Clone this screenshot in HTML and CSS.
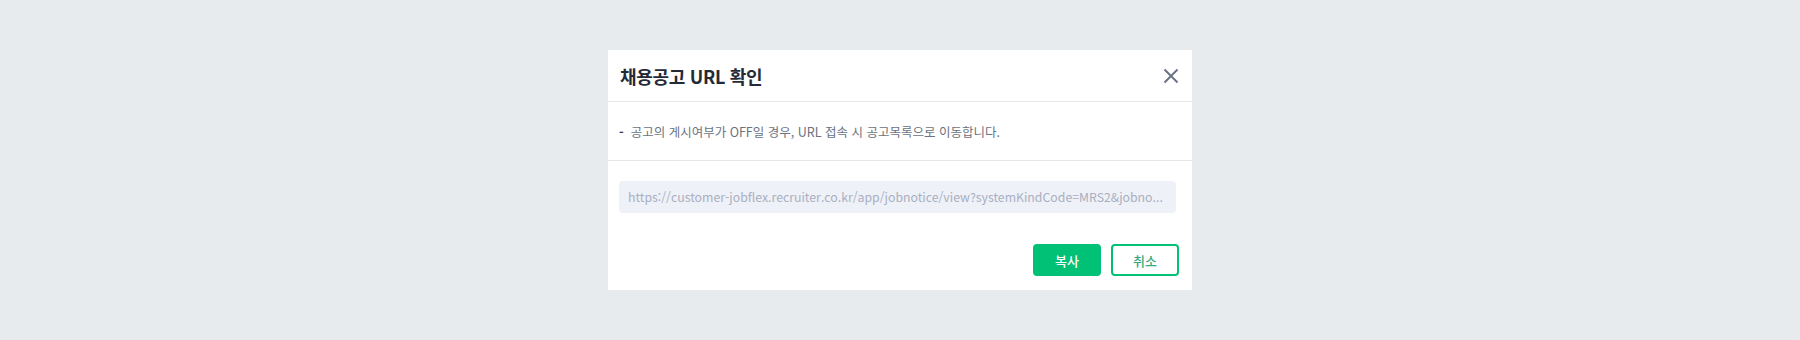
FILE: index.html
```html
<!DOCTYPE html>
<html lang="ko">
<head>
<meta charset="utf-8">
<title>채용공고 URL 확인</title>
<link rel="stylesheet" href="styles.css">
</head>
<body>
<div class="modal">
  <div class="modal-header">
    <h2 class="modal-title">채용공고 URL 확인</h2>
    <button class="close-btn" aria-label="닫기">
      <svg width="16" height="16" viewBox="0 0 16 16"><path d="M1.5 1.5 L14.5 14.5 M14.5 1.5 L1.5 14.5" stroke="#6b7483" stroke-width="2" fill="none"/></svg>
    </button>
  </div>
  <div class="modal-notice">
    <span class="dash">-</span><span class="notice-text">공고의 게시여부가 OFF일 경우, URL 접속 시 공고목록으로 이동합니다.</span>
  </div>
  <div class="modal-body">
    <div class="url-box">https://customer-jobflex.recruiter.co.kr/app/jobnotice/view?systemKindCode=MRS2&amp;jobno...</div>
    <div class="modal-footer">
      <button class="btn btn-primary">복사</button>
      <button class="btn btn-outline">취소</button>
    </div>
  </div>
</div>
</body>
</html>
```
FILE: styles.css
```css
html, body {
  margin: 0;
  padding: 0;
}
body {
  background: #e8ebee;
  height: 340px;
  font-family: "Noto Sans CJK KR", "Noto Sans", sans-serif;
  overflow: hidden;
}
.modal {
  width: 584px;
  margin: 50px auto 0;
  background: #ffffff;
}
.modal-header {
  height: 51px;
  display: flex;
  align-items: center;
  justify-content: space-between;
  padding: 0 12px 0 12px;
  border-bottom: 1px solid #e5e8eb;
}
.modal-title {
  margin: 0;
  font-size: 18px;
  font-weight: 700;
  color: #252b36;
  letter-spacing: -0.3px;
  line-height: 1;
}
.close-btn {
  background: none;
  border: 0;
  padding: 0;
  width: 16px;
  height: 16px;
  display: flex;
  margin-right: 1px;
  cursor: pointer;
}
.modal-notice {
  height: 58px;
  display: flex;
  align-items: center;
  padding: 0 12px 0 11px;
  border-bottom: 1px solid #e5e8eb;
  font-size: 12.5px;
  color: #6b7280;
}
.dash {
  color: #333a45;
  font-weight: 700;
  margin-right: 7px;
}
.modal-body {
  padding: 20px 13px 14px 11px;
}
.url-box {
  width: 540px;
  height: 32px;
  line-height: 32px;
  padding: 0 8px 0 9px;
  background: #eff1f8;
  border-radius: 4px;
  color: #a9afc1;
  font-size: 12.3px;
  white-space: nowrap;
}
.modal-footer {
  margin-top: 31px;
  display: flex;
  justify-content: flex-end;
  gap: 10px;
}
.btn {
  width: 68px;
  height: 32px;
  border-radius: 4px;
  font-family: "Noto Sans CJK KR", "Noto Sans", sans-serif;
  font-size: 13px;
  font-weight: 500;
  cursor: pointer;
  padding: 0;
}
.btn-primary {
  background: #00c176;
  border: 0;
  color: #ffffff;
}
.btn-outline {
  background: #ffffff;
  border: 2px solid #00c176;
  color: #3aa882;
}
```
